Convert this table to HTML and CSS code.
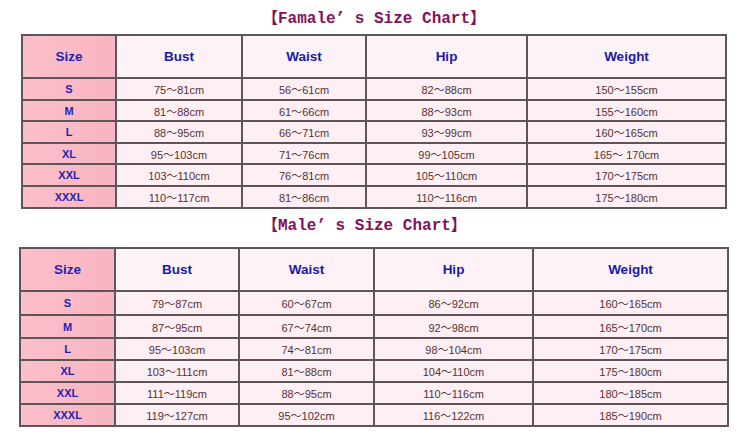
FILE: index.html
```html
<!DOCTYPE html>
<html>
<head>
<meta charset="utf-8">
<link rel="stylesheet" href="styles.css">
</head>
<body>
<div class="page">
  <h2 class="title title-f">【Famale’ s Size Chart】</h2>
  <table class="chart chart-f">
    <colgroup><col class="c1"><col class="c2"><col class="c3"><col class="c4"><col class="c5"></colgroup>
    <tr class="head"><th class="size">Size</th><th>Bust</th><th>Waist</th><th>Hip</th><th>Weight</th></tr>
    <tr><td class="size">S</td><td>75～81cm</td><td>56～61cm</td><td>82～88cm</td><td>150～155cm</td></tr>
    <tr><td class="size">M</td><td>81～88cm</td><td>61～66cm</td><td>88～93cm</td><td>155～160cm</td></tr>
    <tr><td class="size">L</td><td>88～95cm</td><td>66～71cm</td><td>93～99cm</td><td>160～165cm</td></tr>
    <tr><td class="size">XL</td><td>95～103cm</td><td>71～76cm</td><td>99～105cm</td><td>165～ 170cm</td></tr>
    <tr><td class="size">XXL</td><td>103～110cm</td><td>76～81cm</td><td>105～110cm</td><td>170～175cm</td></tr>
    <tr><td class="size">XXXL</td><td>110～117cm</td><td>81～86cm</td><td>110～116cm</td><td>175～180cm</td></tr>
  </table>
  <h2 class="title title-m">【Male’ s Size Chart】</h2>
  <table class="chart chart-m">
    <colgroup><col class="c1"><col class="c2"><col class="c3"><col class="c4"><col class="c5"></colgroup>
    <tr class="head"><th class="size">Size</th><th>Bust</th><th>Waist</th><th>Hip</th><th>Weight</th></tr>
    <tr><td class="size">S</td><td>79～87cm</td><td>60～67cm</td><td>86～92cm</td><td>160～165cm</td></tr>
    <tr><td class="size">M</td><td>87～95cm</td><td>67～74cm</td><td>92～98cm</td><td>165～170cm</td></tr>
    <tr><td class="size">L</td><td>95～103cm</td><td>74～81cm</td><td>98～104cm</td><td>170～175cm</td></tr>
    <tr><td class="size">XL</td><td>103～111cm</td><td>81～88cm</td><td>104～110cm</td><td>175～180cm</td></tr>
    <tr><td class="size">XXL</td><td>111～119cm</td><td>88～95cm</td><td>110～116cm</td><td>180～185cm</td></tr>
    <tr><td class="size">XXXL</td><td>119～127cm</td><td>95～102cm</td><td>116～122cm</td><td>185～190cm</td></tr>
  </table>
</div>
</body>
</html>
```

FILE: styles.css
```css
html, body {
  margin: 0;
  padding: 0;
  background: #ffffff;
}

.page {
  width: 750px;
  height: 448px;
  overflow: hidden;
}

.title {
  margin: 0;
  padding-left: 262px;
  font-family: "Liberation Mono", "Noto Sans CJK SC", monospace;
  font-size: 16px;
  font-weight: bold;
  color: #84115a;
  white-space: nowrap;
}

.title-f {
  height: 34px;
  line-height: 38px;
}

.title-m {
  height: 38px;
  line-height: 34px;
}

.chart {
  border-collapse: collapse;
  table-layout: fixed;
  border: 2px solid #5e5558;
  font-family: "Liberation Sans", "Noto Sans CJK SC", sans-serif;
}

.chart th,
.chart td {
  border: 2px solid #5e5558;
  padding: 0;
  text-align: center;
  vertical-align: middle;
}

.chart th {
  background: #fdf2f5;
  color: #1a1aae;
  font-size: 13.5px;
  font-weight: bold;
}

.chart td {
  background: #fdeff3;
  color: #573133;
  font-size: 11px;
}

.chart .size {
  background: linear-gradient(to right, #fbbfca, #f8b5c2);
  color: #2323b2;
  font-weight: bold;
}

.chart td.size {
  font-size: 11px;
}

.chart-f {
  margin-left: 21px;
  width: 704px;
}

.chart-f tr {
  height: 22px;
}

.chart-f tr:nth-child(3),
.chart-f tr:nth-child(5) {
  height: 21px;
}

.chart-f .head {
  height: 43px;
}

.chart-f .c1 { width: 94px; }
.chart-f .c2 { width: 126px; }
.chart-f .c3 { width: 124px; }
.chart-f .c4 { width: 161px; }
.chart-f .c5 { width: 199px; }

.chart-m {
  margin-left: 19px;
  width: 708px;
}

.chart-m tr {
  height: 22px;
}

.chart-m .head {
  height: 43px;
}

.chart-m tr:nth-child(2) { height: 24px; }
.chart-m tr:nth-child(3) { height: 23px; }

.chart-m .c1 { width: 95px; }
.chart-m .c2 { width: 124px; }
.chart-m .c3 { width: 135px; }
.chart-m .c4 { width: 159px; }
.chart-m .c5 { width: 195px; }
```
